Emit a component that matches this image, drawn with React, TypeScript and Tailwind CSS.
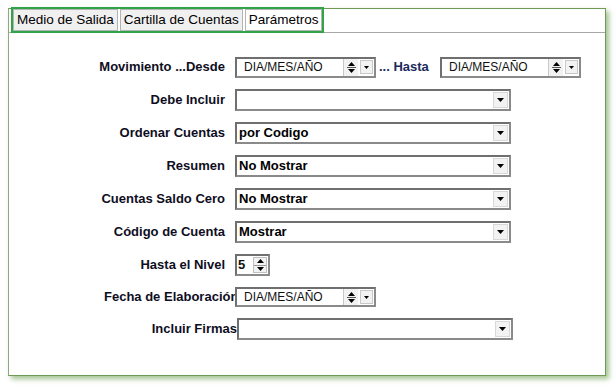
import React from "react";

const F = { fontFamily: '"Liberation Sans", Arial, sans-serif' };

function Tri({ dir = "down", size = 7 }: { dir?: "up" | "down"; size?: number }) {
  const h = Math.ceil(size / 2) + 0;
  return (
    <svg width={size} height={h} viewBox={`0 0 ${size} ${h}`} className="block">
      {dir === "down" ? (
        <polygon points={`0,0 ${size},0 ${size / 2},${h}`} fill="#000" />
      ) : (
        <polygon points={`0,${h} ${size},${h} ${size / 2},0`} fill="#000" />
      )}
    </svg>
  );
}

function Select({ value, w = 276 }: { value?: string; w?: number }) {
  return (
    <div
      className="flex h-[22px] items-center border-2 border-[#8a8a8a] border-t-[#6f6f6f] border-l-[#6f6f6f] bg-white"
      style={{ width: w }}
    >
      <div className="flex-1 pl-[2px] text-[13px] font-bold text-black whitespace-nowrap" style={F}>
        {value}
      </div>
      <div className="mr-[1px] flex h-[16px] w-[15px] items-center justify-center border border-[#d8d8d8] bg-[#f2f2f2]">
        <Tri />
      </div>
    </div>
  );
}

function DateBox({ h = 21 }: { h?: number }) {
  return (
    <div
      className="flex w-[141px] items-center border-2 border-[#8a8a8a] border-t-[#6f6f6f] border-l-[#6f6f6f] bg-white"
      style={{ height: h }}
    >
      <div className="flex-1 pl-[7px] text-[12px] text-[#111]" style={F}>
        DIA/MES/AÑO
      </div>
      <div className="flex h-full w-[15px] flex-col items-center justify-center gap-[1px] border-l border-[#c8c8c8] bg-[#f2f2f2]">
        <Tri dir="up" size={7} />
        <div className="h-px w-[9px] bg-[#555]" />
        <Tri dir="down" size={7} />
      </div>
      <div className="ml-[2px] mr-[1px] flex h-[14px] w-[13px] items-center justify-center border border-[#c8c8c8] bg-[#f2f2f2]">
        <Tri size={5} />
      </div>
    </div>
  );
}

function Spinner() {
  return (
    <div className="flex h-[22px] w-[35px] items-center border-2 border-[#8a8a8a] border-t-[#6f6f6f] border-l-[#6f6f6f] bg-white">
      <div className="flex-1 pl-[1px] text-[13px] font-bold text-[#111]" style={F}>
        5
      </div>
      <div className="mr-[1px] flex h-[16px] w-[14px] flex-col border border-[#c0c0c0] bg-[#f2f2f2]">
        <div className="flex flex-1 items-center justify-center border-b border-[#999]">
          <Tri dir="up" size={7} />
        </div>
        <div className="flex flex-1 items-center justify-center">
          <Tri dir="down" size={7} />
        </div>
      </div>
    </div>
  );
}

function Label({ children }: { children: React.ReactNode }) {
  return (
    <div className="mr-[10px] w-[216px] text-right text-[13px] font-bold text-[#0e0e1e] whitespace-nowrap" style={F}>
      {children}
    </div>
  );
}

export default function App() {
  return (
    <div className="h-[392px] w-[616px] bg-white pl-[8px] pt-[8px]" style={F}>
      <div className="relative h-[368px] w-[598px] border border-[#6f9a55] border-l-[#8fa882] bg-white shadow-[3px_3px_5px_rgba(100,155,70,0.6)]">
        <div className="h-[24px] border-b border-[#a8a8a8]">
          <div className="relative -top-[2px] ml-[2px] inline-flex h-[26px] border-2 border-[#2fa548] bg-white">
            <div className="flex h-full items-center border border-[#b4b4b4] bg-[#f0f0f0] px-[3px] text-[13.5px] text-black">
              Medio de Salida
            </div>
            <div className="ml-[2px] flex h-full items-center border border-[#b4b4b4] bg-[#f0f0f0] px-[3px] text-[13.5px] text-black">
              Cartilla de Cuentas
            </div>
            <div className="ml-[2px] flex h-full items-center border border-[#b4b4b4] bg-white px-[3px] text-[13.5px] text-black">
              Parámetros
            </div>
          </div>
        </div>

        <div className="flex flex-col gap-[11px] pt-[23px]">
          <div className="flex h-[22px] items-center">
            <Label>Movimiento ...Desde</Label>
            <DateBox />
            <div className="ml-[3px] w-[61px] text-[13px] font-bold text-[#1b2a5c]" style={F}>
              ... Hasta
            </div>
            <DateBox />
          </div>
          <div className="flex h-[22px] items-center">
            <Label>Debe Incluir</Label>
            <Select />
          </div>
          <div className="flex h-[22px] items-center">
            <Label>Ordenar Cuentas</Label>
            <Select value="por Codigo" />
          </div>
          <div className="flex h-[22px] items-center">
            <Label>Resumen</Label>
            <Select value="No Mostrar" />
          </div>
          <div className="flex h-[22px] items-center">
            <Label>Cuentas Saldo Cero</Label>
            <Select value="No Mostrar" />
          </div>
          <div className="flex h-[22px] items-center">
            <Label>Código de Cuenta</Label>
            <Select value="Mostrar" />
          </div>
          <div className="flex h-[22px] items-center">
            <Label>Hasta el Nivel</Label>
            <Spinner />
          </div>
          <div className="flex h-[20px] items-center">
            <div
              className="w-[226px] overflow-hidden whitespace-nowrap pl-[95px] text-left text-[13px] font-bold text-[#0e0e1e]"
              style={F}
            >
              Fecha de Elaboración
            </div>
            <DateBox h={20} />
          </div>
          <div className="flex h-[22px] items-center">
            <div className="w-[228px] text-right text-[13px] font-bold text-[#0e0e1e] whitespace-nowrap" style={F}>
              Incluir Firmas
            </div>
            <Select w={276} />
          </div>
        </div>
      </div>
    </div>
  );
}
